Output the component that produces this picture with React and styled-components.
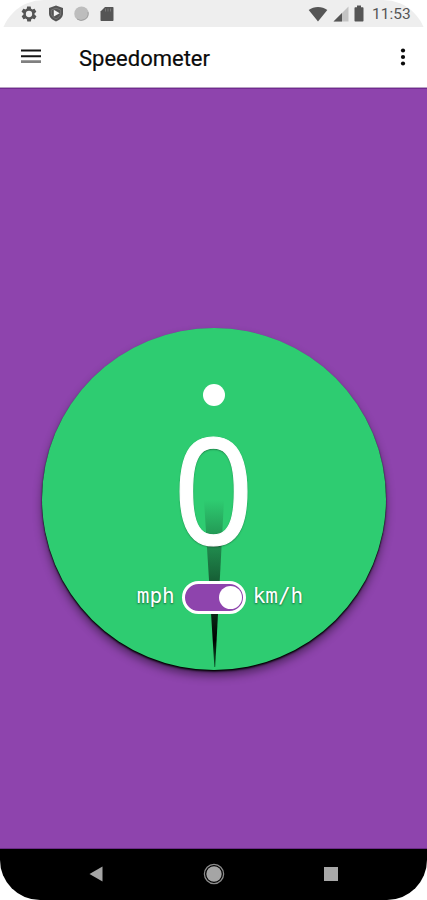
import React from "react";
import styled, { createGlobalStyle } from "styled-components";

const GlobalStyle = createGlobalStyle`
  * { box-sizing: border-box; }
  body { margin: 0; background: #fff; }
`;

const Screen = styled.main`
  width: 427px;
  height: 900px;
  display: flex;
  flex-direction: column;
  overflow: hidden;
  border-radius: 44px 44px 40px 40px;
  background: #fff;
  font-family: Roboto, sans-serif;
`;

const StatusBar = styled.div`
  height: 27px;
  flex: none;
  padding: 0 16px 0 20px;
  display: flex;
  align-items: center;
  justify-content: space-between;
  background: #eeeeee;
  color: #555;
`;

const StatusGroup = styled.div`
  display: flex;
  align-items: center;
  gap: ${(p) => p.$gap}px;
  svg { display: block; }
`;

const Clock = styled.span`
  width: 39px;
  margin-left: 3px;
  font-size: 15.5px;
  line-height: 27px;
  padding-top: 1px;
  white-space: nowrap;
`;

const AppBar = styled.header`
  height: 61px;
  flex: none;
  display: flex;
  align-items: center;
  padding: 0 20px 0 21px;
  background: #fff;
  border-bottom: 1px solid #b9a3c4;
`;

const IconButton = styled.button`
  display: flex;
  padding: 0;
  border: 0;
  background: none;
  color: #111;
`;

const Title = styled.h1`
  flex: 1;
  margin: 3px 0 0 38px;
  font-size: 22px;
  font-weight: 400;
  line-height: 28px;
  letter-spacing: 0;
  color: #0a0a0a;
  -webkit-text-stroke: 0.2px #0a0a0a;
`;

const Content = styled.section`
  flex: 1;
  display: flex;
  justify-content: center;
  padding-top: 239px;
  background: #8e44ad;
  border-top: 1px solid #712a90;
  border-bottom: 1px solid #6b2b86;
`;

const Dial = styled.div`
  position: relative;
  width: 344px;
  height: 342px;
  padding-top: 56px;
  display: flex;
  flex-direction: column;
  align-items: center;
  border-radius: 50%;
  background: #2ecc71;
  box-shadow: 0 1px 1px rgba(0, 0, 0, 0.85), 0 2px 2px rgba(0, 0, 0, 0.65),
    0 6px 10px rgba(0, 0, 0, 0.45);
`;

const Needle = styled.svg`
  position: absolute;
  left: 162px;
  top: 172px;
`;

const Dot = styled.div`
  width: 22px;
  height: 22px;
  border-radius: 50%;
  background: #fff;
`;

const Speed = styled.output`
  position: relative;
  height: 113px;
  margin-top: 25px;
  margin-left: 1px;
  font-family: "Noto Sans", sans-serif;
  font-size: 149px;
  line-height: 113px;
  color: #fff;
  -webkit-text-stroke: 1.2px #fff;
  text-shadow: 0 1px 2px rgba(0, 0, 0, 0.55);
  transform: scaleX(0.945);
`;

const UnitRow = styled.div`
  position: relative;
  margin-top: 37px;
  display: flex;
  align-items: center;
  margin-left: 13px;
`;

const Unit = styled.span`
  font-family: "DejaVu Sans Mono", monospace;
  font-size: 21px;
  line-height: 28px;
  color: #fff;
  text-shadow: 0 1px 2px rgba(0, 0, 0, 0.55);
  margin-top: -4px;
`;

const Toggle = styled.button`
  width: 64px;
  height: 33px;
  margin: 0 7px;
  padding: 0;
  display: flex;
  align-items: center;
  justify-content: flex-end;
  border: 3px solid #fff;
  border-radius: 17px;
  background: #8e44ad;
`;

const Knob = styled.span`
  width: 23px;
  height: 23px;
  margin-right: 1px;
  border-radius: 50%;
  background: #fff;
`;

const NavBar = styled.nav`
  height: 51px;
  flex: none;
  display: flex;
  align-items: center;
  justify-content: space-between;
  padding: 0 88px 1px;
  background: #000;
`;

const Gear = () => (
  <svg width="18" height="18" viewBox="0 0 24 24" fill="currentColor">
    <path fillRule="evenodd" d="M19.4 13c.1-.7.1-1.3 0-2l2.1-1.6c.2-.2.3-.4.1-.7l-2-3.400c-.1-.2-.4-.3-.6-.2l-2.500 1c-.5-.4-1.100-.7-1.700-1l-.4-2.600c0-.3-.2-.5-.5-.5h-4c-.2 0-.4.2-.5.4l-.4 2.700c-.6.2-1.100.6-1.700 1l-2.500-1c-.2-.1-.4 0-.6.2l-2 3.400c-.1.2 0 .5.1.7L4.600 11c-.1.700-.1 1.300 0 2l-2.100 1.600c-.2.200-.3.500-.1.700l2 3.400c.1.200.4.300.6.200l2.500-1c.5.400 1.100.700 1.700 1l.4 2.600c0 .300.2.500.5.500h4c.2 0 .4-.200.5-.400l.4-2.700c.6-.200 1.100-.600 1.700-1l2.500 1c.2.100.4 0 .6-.200l2-3.400c.1-.200 0-.500-.1-.700ZM12 16.200a4.200 4.200 0 1 1 0-8.400 4.200 4.200 0 0 1 0 8.400Z" />
  </svg>
);

const Shield = () => (
  <svg width="16" height="17" viewBox="0 0 16 17">
    <path d="M8 .5 15 3v5.500c0 3.500-3 6.500-7 8-4-1.500-7-4.500-7-8V3Z" fill="#555" />
    <path d="M8 3.200 12.700 5v3.300c0 2.400-2 4.300-4.700 5.600-2.700-1.300-4.700-3.200-4.700-5.600V5Z" fill="none" stroke="#888" strokeWidth=".6" />
    <path d="M5.800 4.800 11.700 8.200 5.800 11.600Z" fill="#f4f4f4" />
  </svg>
);

const Disc = () => (
  <svg width="16" height="16" viewBox="0 0 16 16">
    <circle cx="7.500" cy="7.700" r="7.200" fill="#bdbdbd" />
    <path d="M3 13A7 7 0 0 0 14 6" fill="none" stroke="#a0a0a0" strokeWidth="1" />
  </svg>
);

const SdCard = () => (
  <svg width="14" height="16" viewBox="0 0 14 16">
    <path d="M5 1h7.500c.8 0 1 .4 1 1v12c0 .7-.3 1-1 1h-11c-.7 0-1-.3-1-1V5.500Z" fill="#555" />
    <path d="M5.500 2.500v3M8 2.500v3M10.500 2.500v3" stroke="#777" strokeWidth="1" />
  </svg>
);

const Wifi = () => (
  <svg width="20" height="16" viewBox="0 0 20 16">
    <path d="M.7 4C6 0 14 0 19.300 4L10 15.500Z" fill="#555" />
  </svg>
);

const Signal = () => (
  <svg width="16" height="16" viewBox="0 0 16 16">
    <path d="M15.500.5v15H.5Z" fill="#c3c3c3" />
    <path d="M9 7v8.500H.5Z" fill="#555" />
  </svg>
);

const Battery = () => (
  <svg width="10" height="17" viewBox="0 0 10 17">
    <path d="M3 .5h4v1.700h1.500c.6 0 1 .3 1 1v12.300c0 .6-.4 1-1 1h-7c-.6 0-1-.4-1-1V3.200c0-.7.400-1 1-1H3Z" fill="#555" />
  </svg>
);

export default function App() {
  return (
    <>
      <GlobalStyle />
      <Screen>
        <StatusBar>
          <StatusGroup $gap={10}>
            <Gear />
            <Shield />
            <Disc />
            <SdCard />
          </StatusGroup>
          <StatusGroup $gap={5}>
            <Wifi />
            <Signal />
            <Battery />
            <Clock>11:53</Clock>
          </StatusGroup>
        </StatusBar>
        <AppBar>
          <IconButton aria-label="Menu">
            <svg width="20" height="16" viewBox="0 0 20 16">
              <path d="M0 1.500h20M0 7.200h20" stroke="#151515" strokeWidth="2" />
              <path d="M0 12.700h20" stroke="#808080" strokeWidth="2.800" />
            </svg>
          </IconButton>
          <Title>Speedometer</Title>
          <IconButton aria-label="More options">
            <svg width="8" height="20" viewBox="0 0 8 20" fill="#0a0a0a">
              <circle cx="4" cy="3.500" r="2.100" />
              <circle cx="4" cy="10" r="2.100" />
              <circle cx="4" cy="16.500" r="2.100" />
            </svg>
          </IconButton>
        </AppBar>
        <Content>
          <Dial>
            <Needle width="20" height="168" viewBox="0 0 20 168">
              <defs>
                <linearGradient id="needleFade" x1="0" y1="0" x2="0" y2="1">
                  <stop offset="0" stopColor="#124a2a" stopOpacity="0" />
                  <stop offset=".18" stopColor="#124a2a" stopOpacity=".34" />
                  <stop offset=".45" stopColor="#124a2a" stopOpacity=".78" />
                  <stop offset=".7" stopColor="#06160d" stopOpacity=".92" />
                  <stop offset=".84" stopColor="#000" />
                  <stop offset="1" stopColor="#0d5a2d" />
                </linearGradient>
              </defs>
              <path d="M0 0h20L11.200 167h-.8Z" fill="url(#needleFade)" />
            </Needle>
            <Dot />
            <Speed>0</Speed>
            <UnitRow>
              <Unit>mph</Unit>
              <Toggle role="switch" aria-checked="true" aria-label="Speed unit">
                <Knob />
              </Toggle>
              <Unit>km/h</Unit>
            </UnitRow>
          </Dial>
        </Content>
        <NavBar>
          <svg width="16" height="16" viewBox="0 0 16 16">
            <path d="M14.500 .5v15L1.500 8Z" fill="#a5a5a5" />
          </svg>
          <svg width="22" height="22" viewBox="0 0 22 22">
            <circle cx="11" cy="11" r="7.700" fill="#a5a5a5" />
            <circle cx="11" cy="11" r="9.600" fill="none" stroke="#8b8b8b" strokeWidth="1.300" />
          </svg>
          <svg width="16" height="16" viewBox="0 0 16 16">
            <rect x="1" y="1" width="14" height="14" fill="#a8a8a8" />
          </svg>
        </NavBar>
      </Screen>
    </>
  );
}
